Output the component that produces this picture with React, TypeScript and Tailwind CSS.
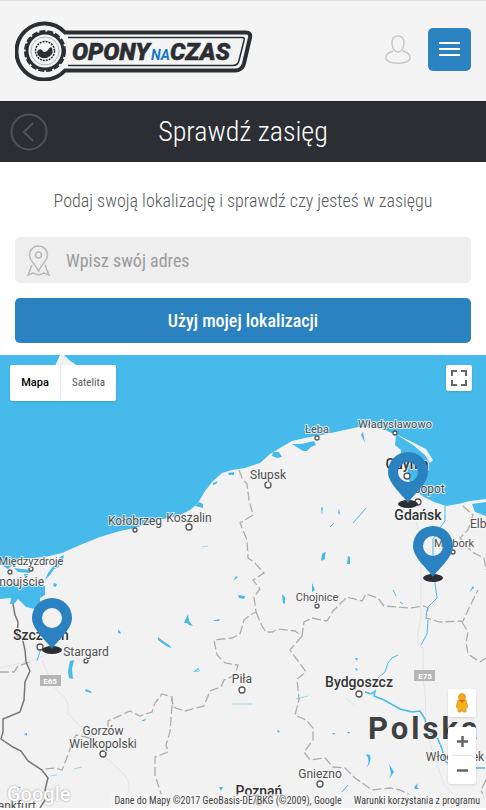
import React from "react";

type Label = {
  text: string;
  x: number;
  y: number;
  size: number;
  weight?: number;
  anchor?: "start" | "middle" | "end";
};

const labels: Label[] = [
  { text: "Łeba", x: 317, y: 433, size: 11 },
  { text: "Władysławowo", x: 395, y: 428, size: 11 },
  { text: "Słupsk", x: 268, y: 479, size: 12 },
  { text: "Gdynia", x: 407, y: 469, size: 14, weight: 500 },
  { text: "Sopot", x: 429, y: 493, size: 12 },
  { text: "Gdańsk", x: 418, y: 520, size: 14, weight: 500 },
  { text: "Kołobrzeg", x: 135, y: 525, size: 12 },
  { text: "Koszalin", x: 189, y: 522, size: 12 },
  { text: "Międzyzdroje", x: 31, y: 565, size: 11 },
  { text: "Świnoujście", x: 44, y: 586, size: 12, anchor: "end" },
  { text: "Szczecin", x: 41, y: 640, size: 14, weight: 500 },
  { text: "Stargard", x: 86, y: 656, size: 12 },
  { text: "Elbląg", x: 470, y: 528, size: 12, anchor: "start" },
  { text: "Malbork", x: 454, y: 547, size: 11 },
  { text: "Chojnice", x: 317, y: 601, size: 11 },
  { text: "Piła", x: 242, y: 683, size: 12 },
  { text: "Bydgoszcz", x: 359, y: 687, size: 14, weight: 500 },
  { text: "Gorzów", x: 103, y: 735, size: 12 },
  { text: "Wielkopolski", x: 103, y: 748, size: 12 },
  { text: "Włocławek", x: 455, y: 761, size: 12 },
  { text: "Gniezno", x: 320, y: 778, size: 12 },
  { text: "Poznań", x: 259, y: 796, size: 14, weight: 500 },
  { text: "Frankfurt", x: 36, y: 810, size: 12, anchor: "end" },
];

const towns: [number, number, number][] = [
  [268, 485, 3], [317, 438, 2], [395, 433, 2], [407, 476, 3], [418, 502, 3],
  [135, 530, 2], [189, 527, 3], [31, 569, 2], [10, 572, 2], [40, 647, 3],
  [86, 661, 2], [453, 552, 2], [317, 606, 2], [242, 690, 3], [359, 694, 3],
  [103, 754, 3], [320, 784, 3], [259, 802, 3],
];

const pins: [number, number][] = [
  [408, 504],
  [433, 578],
  [52, 650],
];

function Map() {
  return (
    <svg
      className="absolute inset-0 h-full w-full"
      viewBox="0 355 486 453"
      preserveAspectRatio="xMidYMid slice"
      role="img"
      aria-label="Mapa zasięgu"
    >
      <rect x="0" y="355" width="486" height="453" fill="#46baeb" />
      {/* Bornholm */}
      <path d="M55 366l5-11h4l5 5 9 6v3H55z" fill="#f2f2f2" />
      {/* Mainland */}
      <path
        d="M0 564L8 569L20 559L45 557L62 553L80 545L100 537L120 531L135 528L155 521L180 515L190 510L198 503L205 491L213 481L222 473L232 470L245 468L260 463L270 454L285 445L292 441L305 438L322 435L340 431L358 427L372 427L385 430L396 435L395 445L401 450L401 460L407 466L408 478L414 490L424 497L434 502L446 506L458 504L470 501L486 499V808H0z"
        fill="#f2f2f2"
      />
      {/* Hel */}
      <path d="M394 433L414 443L426 449L433 460L430 463L425 455L413 445z" fill="#f2f2f2" />
      <g fill="#46baeb">
        <path d="M472 504l14-2v14l-11-4z" />
        <path d="M0 584L8 586L14 582L22 587L30 583L45 586L45 595L40 598L40 605L35 609L26 607L18 599L14 604L10 604L11 598L0 599zM14 568l16 2v3l-12-1zM24 574h4l-2 10z" />
        <path d="M45 580l3-7 7-9 5-7 4-2-1 5-4 2 0 5-5 2-4 6zM54 583l3 1-1 3-3-1z" />
        <path d="M292 444l9 0 13-3 2 4-5 2-4 4-4 0zM273 452l6 0 3 5-5 1-5-2zM228 473l6-1v3h-5zM199 502l4 2v4l-8-2zM213 483l5-2-2 3-3 1zM361 435l2-3 2 11z" />
        <path d="M70 661l4-1-2 9 1 10-4-1-1-7zM86 689l6 3-2 1-5-2zM65 676l2 3M118 630l2 1 1 3-3-1zM158 637l5 4 6 4 3 3-4-1-6-4-4-3zM188 614l1 7 4 5-4-1-2-2-3 0zM238 595l7 1-1 3-5-1zM238 577l-5 4 3-5zM215 620l5-1-1 2h-6zM325 552l-2 5 3-4z" />
        <path d="M282 594l3 3 0 7-2-1zM312 583l3 7-3 2zM322 554l3-2v7l-4 2zM348 556l2 1v7h-3zM321 507l2 1-1 7zM339 508l1 7-2-2zM474 588l-5 4 4-6zM143 720l4-2-3 3h-3zM193 672l7-1-2-3zM196 669l4 2-2 1zM366 754q5 8 0 14 6-5 4-13zM389 764l2 10-2 5 5-7zM414 787l4-4-1 4 2 2-4 0zM219 787l4 0-2 4zM24 734l3-1 0 3zM171 697l2 5-2-1zM355 658l3 0-1 3zM355 668l3 1-2 2zM277 730l3 1-2 2zM332 733h3l-1 2zM347 732h3l-1 2z" />
      </g>
      {/* Faint roads */}
      <g fill="none" stroke="#e4e4e4" strokeWidth="1">
        <path d="M42 660l5 12 6 14 12 12 3 6v10l12 12 12 10 10 18 22 20 4 6 3 30M0 668l40-10 15-9M416 522l5 15v80l-3 15 0 12 5 4v32l2 10 1 35M424 725l20 60 20 20M312 790l8-12M345 698l10 7M65 650l20 14" />
      </g>
      {/* Region borders */}
      <g fill="none" stroke="#adadad" strokeWidth="1.3" strokeDasharray="9 3">
        <path d="M239 470l3 8 5 6 2 16 4 15-13 8 7 17 1 18 6 4 10 11-11 7 7 9-6 8 2 15-6 3-6 5-4 14-8 4-18 2 3 15 8 8 13 2-3 10-11 5-3 7-11 4-6 15-19 5-12-4-1-10-10-3-7 9-3 9-12 4-10-5-22 10v9M90 738l-14-3-4 8-4 12-6 15-7-2-12 1" />
        <path d="M256 612l6 14 4 6h6l6-3 17 2 7 5 2-14 8-4 15 3 6-10 14-14 15 4 4-7 12 4 6 8 26 2 14-2 4 2-2 10 14 4 23-1 5-11 10-20" />
        <path d="M302 636l-12 14 16 22-9 7 2 21-4 15 11 5 7 8v12l-9 12 6 8 15-2 8 9 12 1 10 10 17 12 18-2 10 2 10 5" />
        <path d="M463 506l10 9-5 15-8 8 12 14 12 6 2 12M462 622l6 10-2 10 2 12 12 8 6-4M172 705l-2 27-4 13 2 7-13 5v18l7 22M0 672h14l4-6 12-4M486 780l-5 10 5 12" />
      </g>
      {/* Rivers */}
      <g fill="none" stroke="#46baeb" strokeWidth="1">
        <path d="M365 692l6 2 4-3-1 5 10 4 16 9 12 3 8-1 5 8 3 12 10 8 4 10 3 12 10 7h30" strokeWidth="1.5" />
        <path d="M378 678l7-6 3-9 4-5 6-3M445 503v18l-6 8-6 10v22l2 22 2 15-9 9-2 8M348 785l-6 7M428 620l-1 14-6 11M42 645l-5 16M353 523l7-8 6-7M393 590l3 6M400 602l3 2M16 789l5-2M330 527l4-4" />
        <path d="M232 704h20M296 699l12-3M50 776l7-1M74 769l8-2M202 547l6-1" strokeOpacity=".5" />
      </g>
      {/* State border */}
      <path
        d="M13 604l2 11 3 7-1 15h5l3 13 1 12 4 9-5 11-1 18-4 12-17 7v13l-2 7 12 8 8 4 7 10 14 9 6 8-3 12 2 7-7 11"
        fill="none"
        stroke="#777"
        strokeWidth="1.5"
      />
      {/* Road shields */}
      <g className="font-['Roboto',sans-serif]" fontSize="8" fontWeight="700" textAnchor="middle">
        <rect x="40" y="675" width="21" height="11" fill="#b5b5b5" />
        <text x="50" y="684" fill="#fff">E65</text>
        <rect x="414" y="670" width="21" height="11" fill="#b5b5b5" />
        <text x="425" y="679" fill="#fff">E75</text>
      </g>
      {/* Town markers and names */}
      <g fill="#fff" stroke="#555" strokeWidth="1.3">
        {towns.map(([x, y, r]) => (
          <circle key={`${x}-${y}`} cx={x} cy={y} r={r} />
        ))}
      </g>
      <g
        className="font-['Roboto',sans-serif]"
        stroke="#f7f7f7"
        strokeWidth="2"
        strokeOpacity="0.8"
        strokeLinejoin="round"
        paintOrder="stroke"
      >
        {labels.map((l) => (
          <text
            key={l.text}
            x={l.x}
            y={l.y}
            fontSize={l.size}
            fontWeight={l.weight ?? 400}
            textAnchor={l.anchor ?? "middle"}
            fill={l.weight ? "#333" : "#505050"}
          >
            {l.text}
          </text>
        ))}
        <text x="368" y="739" fontSize="31" fontWeight="700" letterSpacing="3" fill="#404040">
          Polska
        </text>
      </g>
      {/* Service pins */}
      {pins.map(([x, y]) => (
        <g key={x} transform={`translate(${x} ${y})`}>
          <ellipse cx="0" cy="0" rx="10" ry="4" fill="#2b2e33" />
          <path
            fill="#2a82c1"
            fillRule="evenodd"
            d="M0-1C-4-8-20-20-20-32A20 20 0 0 1 20-32C20-20 4-8 0-1zM0-42A10 10 0 1 0 0-22A10 10 0 1 0 0-42z"
          />
        </g>
      ))}
    </svg>
  );
}

function Logo() {
  return (
    <svg width="238" height="60" viewBox="15 21 238 60" role="img" aria-label="Opony na czas">
      <path
        d="M65 32.500H246q5 0 4 5l-6 26q-2 7-9 7H65A28 28 0 1 1 65 32.500z"
        fill="#f4f4f4"
        stroke="#2b2e33"
        strokeWidth="4"
      />
      <path d="M68 37.500H242q3 0 2 3l-5 20q-1 5-6 5H68" fill="none" stroke="#2b2e33" strokeWidth="1.500" />
      <circle cx="45" cy="51" r="18" fill="none" stroke="#2b2e33" strokeWidth="3" />
      <circle cx="45" cy="51" r="20" fill="none" stroke="#2b2e33" strokeWidth="2" strokeDasharray="6 2" />
      <circle cx="45" cy="51" r="14" fill="none" stroke="#b5b5b5" strokeWidth="1" />
      <circle cx="45" cy="51" r="9.500" fill="none" stroke="#2b2e33" strokeWidth="1.500" strokeDasharray="2 1" />
      <path d="M37 52q2-4 5-2 2 4 6 0 2-4 4-2 2 5-2 8-5 4-10 1-3-2-3-5z" fill="#2b2e33" />
      <g
        className="font-['Roboto',sans-serif]"
        fontSize="24"
        fontWeight="900"
        fontStyle="italic"
        fill="#2b2e33"
        stroke="#2b2e33"
        strokeWidth="0.500"
      >
        <text x="72" y="60">OPONY</text>
        <text x="151" y="60" fontSize="14" fontWeight="700" fill="#1678c8" stroke="none">NA</text>
        <text x="170" y="60">CZAS</text>
      </g>
    </svg>
  );
}

export default function App() {
  return (
    <div className="w-full bg-white font-['Roboto_Condensed','Roboto',sans-serif]">
      <header className="flex h-[101px] items-center justify-between border-t border-[#dedede] bg-[#f4f4f4] px-[15px] pb-1">
        <a href="#start" className="pt-1">
          <Logo />
        </a>
        <div className="flex items-center gap-[17px]">
          <button type="button" aria-label="Konto">
            <svg width="26" height="30" viewBox="0 0 26 30" fill="none" stroke="#c8c8c8" strokeWidth="1.500">
              <path d="M13 2c4 0 6 3 6 7s-2 9-6 9-6-5-6-9 2-7 6-7zM8 17c-4 2-7 2-7 7 0 7 24 7 24 0 0-5-3-5-7-7" />
            </svg>
          </button>
          <button
            type="button"
            aria-label="Menu"
            className="flex size-[43px] flex-col items-center justify-center gap-1 rounded-[5px] bg-[#2a82c1]"
          >
            <span className="h-0.5 w-[21px] bg-white" />
            <span className="h-0.5 w-[21px] bg-white" />
            <span className="h-0.5 w-[21px] bg-white" />
          </button>
        </div>
      </header>

      <div className="grid h-[61px] grid-cols-[38px_1fr_38px] items-center border-y border-[#222529] bg-[#2b2e33] px-[10px]">
        <button type="button" aria-label="Wstecz">
          <svg width="38" height="38" viewBox="0 0 38 38" fill="none" stroke="#505357" strokeWidth="2">
            <circle cx="19" cy="19" r="17.500" />
            <path d="M23 10l-9 9 9 9" strokeWidth="2" />
          </svg>
        </button>
        <h1 className="text-center text-[28px] leading-8 font-light text-white">Sprawdź zasięg</h1>
      </div>

      <main>
        <form className="px-[15px] pt-[27px] pb-3" onSubmit={(e) => e.preventDefault()}>
          <p className="text-center text-[18px] leading-6 font-light text-[#55585c]">
            Podaj swoją lokalizację i sprawdź czy jesteś w zasięgu
          </p>
          <label className="mt-6 flex h-[46px] items-center gap-4 rounded-[5px] bg-[#eee] pl-3">
            <svg width="23" height="31" viewBox="0 0 23 31" fill="none" stroke="#b9b9b9" strokeWidth="1.500">
              <path d="M11.500 26C9 20 2.500 16 2.500 10a9 9 0 0 1 18 0C20.500 16 14 20 11.500 26z" />
              <circle cx="11.500" cy="10" r="3" />
              <path d="M5 20l-4 10 5-2 5.500 2 5.500-2 5 2-4-10" />
            </svg>
            <span className="sr-only">Adres</span>
            <input
              type="text"
              placeholder="Wpisz swój adres"
              className="h-8 min-w-0 flex-1 bg-transparent text-[18px] outline-none placeholder:text-[#9b9b9b]"
            />
          </label>
          <button
            type="button"
            className="mt-[15px] h-[45px] w-full rounded-[5px] bg-[#2a82c1] text-[18px] font-medium text-white"
          >
            Użyj mojej lokalizacji
          </button>
        </form>

        <section className="relative h-[453px] overflow-hidden">
          <Map />
          <div className="absolute top-[10px] left-[10px] flex h-9 rounded-[2px] bg-white text-[11px] shadow">
            <button type="button" className="w-[51px] border-r border-gray-200 font-['Roboto',sans-serif] font-medium text-black">
              Mapa
            </button>
            <button type="button" className="w-[55px] text-[#565656]">
              Satelita
            </button>
          </div>
          <button
            type="button"
            aria-label="Pełny ekran"
            className="absolute top-[10px] right-[14px] flex size-[26px] items-center justify-center rounded-[2px] bg-white shadow"
          >
            <svg width="16" height="16" viewBox="0 0 16 16" fill="none" stroke="#666" strokeWidth="2">
              <path d="M1 6V1h5M10 1h5v5M15 10v5h-5M6 15H1v-5" />
            </svg>
          </button>
          <div className="absolute right-[10px] bottom-6 flex w-7 flex-col gap-[10px]">
            <button
              type="button"
              aria-label="Street View"
              className="flex h-7 items-center justify-center rounded-[2px] bg-white shadow"
            >
              <svg width="12" height="20" viewBox="0 0 12 20">
                <path d="M2 7h8l2 7-2 1v4H7l-1-3-1 3H2v-4l-2-1z" fill="#f5b21b" stroke="#c98613" strokeWidth=".6" />
                <circle cx="6" cy="4" r="3.500" fill="#f5a91b" stroke="#c98613" strokeWidth=".6" />
                <path d="M3 7l3 3 3-3z" fill="#e0641c" />
              </svg>
            </button>
            <div className="flex flex-col items-center rounded-[2px] bg-white shadow">
              <button type="button" aria-label="Powiększ" className="flex h-7 w-full items-center justify-center">
                <svg width="11" height="11" viewBox="0 0 11 11" stroke="#666" strokeWidth="2.500">
                  <path d="M0 5.500h11M5.500 0v11" />
                </svg>
              </button>
              <span className="h-px w-5 bg-[#e6e6e6]" />
              <button type="button" aria-label="Pomniejsz" className="flex h-7 w-full items-center justify-center">
                <svg width="11" height="11" viewBox="0 0 11 11" stroke="#666" strokeWidth="2.500">
                  <path d="M0 5.500h11" />
                </svg>
              </button>
            </div>
          </div>
          <span className="absolute bottom-0 left-[7px] font-['Roboto',sans-serif] text-[20px] leading-7 font-medium text-white [text-shadow:0_0_2px_#888]">
            Google
          </span>
          <div className="absolute right-0 bottom-0 flex h-[14px] items-center text-[10px] leading-[14px] whitespace-nowrap text-[#444]">
            <span className="bg-[#f5f5f5]/70 pr-3 pl-1">Dane do Mapy ©2017 GeoBasis-DE/BKG (©2009), Google</span>
            <a href="#warunki" className="bg-[#f5f5f5]/70 pr-[6px]">
              Warunki korzystania z programu
            </a>
          </div>
        </section>
      </main>
    </div>
  );
}
